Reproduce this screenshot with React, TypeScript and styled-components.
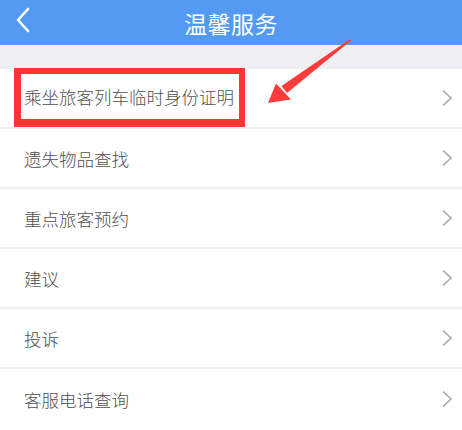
import styled, { createGlobalStyle } from "styled-components";

const GlobalStyle = createGlobalStyle`
  html, body {
    margin: 0;
    padding: 0;
    background: #ffffff;
    font-family: "Noto Sans CJK SC", "Noto Sans", sans-serif;
  }
`;

const items = [
  "乘坐旅客列车临时身份证明",
  "遗失物品查找",
  "重点旅客预约",
  "建议",
  "投诉",
  "客服电话查询",
];

const BackIcon = () => (
  <svg width="16" height="26" viewBox="0 0 16 26">
    <path d="M13 2 L3 13 L13 24" fill="none" stroke="#fff" strokeWidth="2.6" strokeLinecap="round" strokeLinejoin="round" />
  </svg>
);

const Chevron = () => (
  <svg width="12" height="18" viewBox="0 0 12 18">
    <path d="M2 1.5 L10 9 L2 16.5" fill="none" stroke="#aaaaaa" strokeWidth="1.7" strokeLinejoin="miter" />
  </svg>
);

const PointerArrow = () => (
  <svg width="462" height="130" viewBox="0 0 462 130">
    <polygon points="351,40.5 349.5,39.5 281.5,86 287,93" fill="#ff3b3b" />
    <polygon points="268,103 276,83.5 291,99.5" fill="#ff3b3b" />
  </svg>
);

const App = () => {
  return (
    <Page>
      <GlobalStyle />
      <Header>
        <BackButton>
          <BackIcon />
        </BackButton>
        <Title>温馨服务</Title>
      </Header>
      <Spacer />
      <List>
        {items.map((label, i) => (
          <Row key={label} $last={i === items.length - 1}>
            {i === 0 ? <Highlight>{label}</Highlight> : <Label>{label}</Label>}
            <Chevron />
          </Row>
        ))}
      </List>
      <ArrowLayer>
        <PointerArrow />
      </ArrowLayer>
    </Page>
  );
};

const Page = styled.div`
  position: relative;
  width: 462px;
  height: 430px;
  overflow: hidden;
  background: #ffffff;
`;

const Header = styled.div`
  height: 45px;
  background: #5499f2;
  display: flex;
  align-items: center;
  justify-content: center;
  position: relative;
`;

const BackButton = styled.div`
  position: absolute;
  left: 15px;
  top: 7px;
  display: flex;
`;

const Title = styled.h1`
  margin: 0;
  font-size: 23px;
  font-weight: 400;
  color: #ffffff;
  letter-spacing: 0.5px;
`;

const Spacer = styled.div`
  height: 24px;
  background: #eeeef3;
`;

const List = styled.div`
  display: flex;
  flex-direction: column;
`;

const Row = styled.div<{ $last: boolean }>`
  height: 60px;
  box-sizing: border-box;
  display: flex;
  align-items: center;
  justify-content: space-between;
  padding: 0 9px 0 24px;
  border-bottom: ${(p) => (p.$last ? "none" : "2px solid #f0f0f0")};
`;

const Label = styled.span`
  font-size: 17.5px;
  font-weight: 300;
  color: #505050;
`;

const Highlight = styled(Label)`
  margin-left: -10px;
  padding: 0 5px 0 3px;
  height: 59px;
  box-sizing: border-box;
  display: flex;
  align-items: center;
  border: 6px solid #ff3535;
  border-left-width: 7px;
  border-bottom-width: 8px;
  margin-top: -2px;
`;

const ArrowLayer = styled.div`
  position: absolute;
  left: 0;
  top: 0;
  pointer-events: none;
`;

export default App;
